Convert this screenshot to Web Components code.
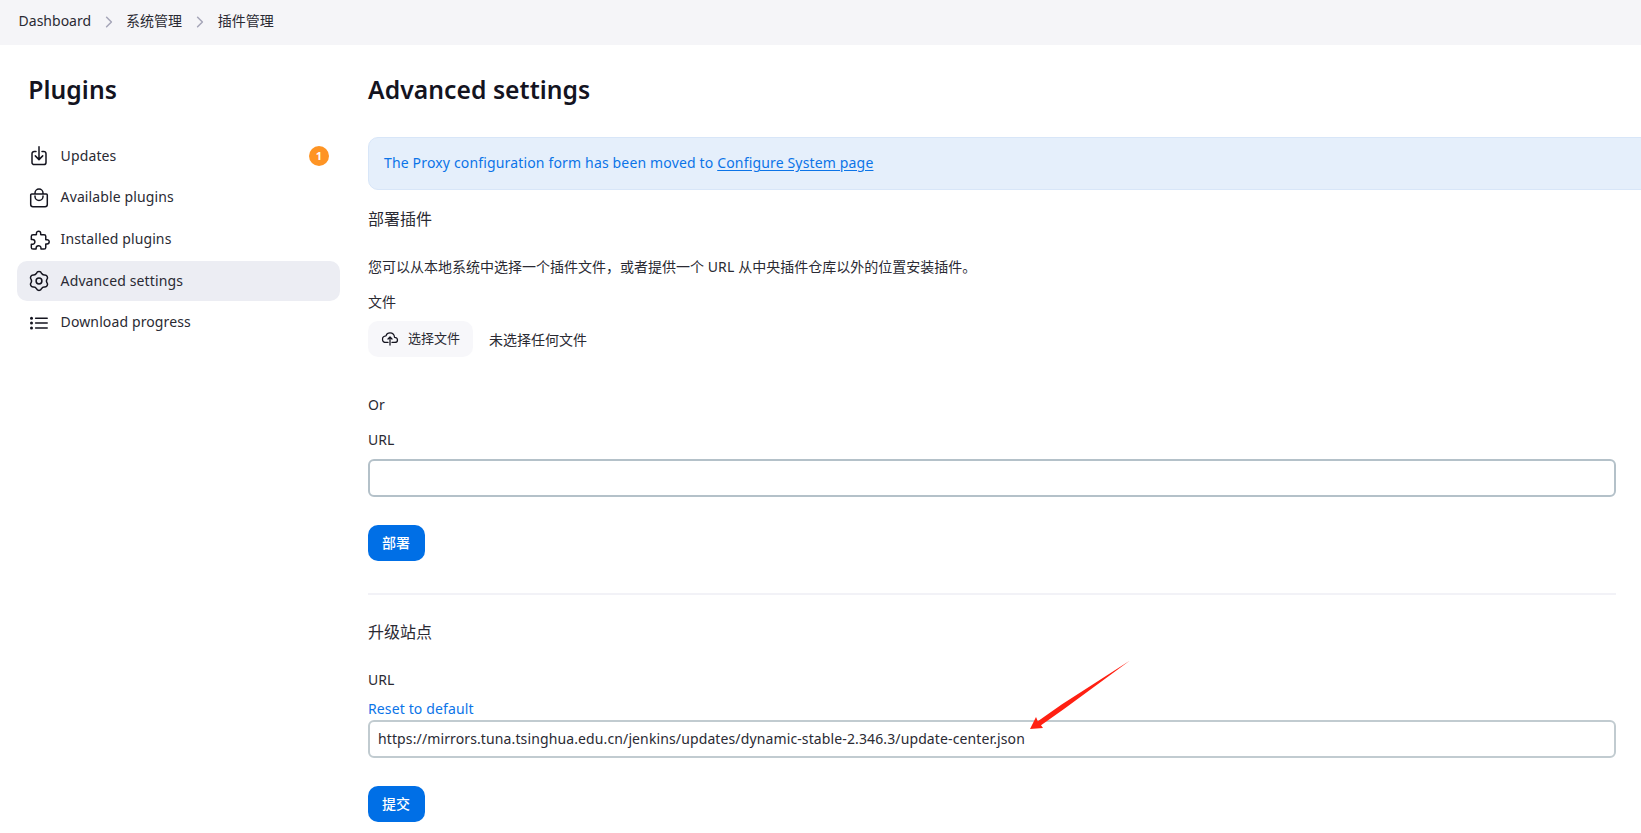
<!DOCTYPE html>
<html lang="zh-CN">
<head>
<meta charset="utf-8">
<title>Plugins - Advanced settings</title>
<style>
html,body{margin:0;background:#fff}
body{font:14px/20px "Noto Sans","Noto Sans CJK SC",sans-serif;color:#2a2a33;height:833px;overflow:hidden;position:relative}
</style>
</head>
<body>
<plugin-page></plugin-page>
<script>
const ICONS = {
  download: '<svg width="24" height="24" viewBox="0 0 24 24"><path d="M9 7.5H7.2a2.2 2.2 0 0 0-2.2 2.2v8.7a2.2 2.2 0 0 0 2.2 2.2h9.6a2.2 2.2 0 0 0 2.2-2.2V9.7a2.2 2.2 0 0 0-2.2-2.2H15M12 2.8v12.4M8.3 11.9l3.7 3.7 3.7-3.7"/></svg>',
  bag: '<svg width="24" height="24" viewBox="0 -.7 24 24"><path d="M4.7 8.2h14.6a1 1 0 0 1 1 1v9.6a2.2 2.2 0 0 1-2.2 2.2H5.9a2.2 2.2 0 0 1-2.2-2.2V9.2a1 1 0 0 1 1-1zM8 8V7.3a4 4 0 0 1 8 0V8M8 10.2v.6a4 4 0 0 0 8 0v-.6"/></svg>',
  puzzle: '<svg width="24" height="24" viewBox="-52.6 -50 558.5 558.5" style="stroke-width:34"><path d="M413.66 246.1H386a2 2 0 01-2-2v-77.24A38.86 38.86 0 00345.14 128H267.9a2 2 0 01-2-2V98.34c0-27.14-21.5-49.86-48.64-50.33a49.53 49.53 0 00-50.4 49.51V126a2 2 0 01-2 2H87.62A39.74 39.74 0 0048 167.62V238a2 2 0 002 2h26.91c29.37 0 53.68 25.48 54.09 54.85.42 29.87-23.51 57.15-53.29 57.15H50a2 2 0 00-2 2v70.38A39.74 39.74 0 0087.62 464H158a2 2 0 002-2v-20.93c0-30.28 24.75-56.35 55-57.06 30.1-.7 57 20.31 57 50.28V462a2 2 0 002 2h71.14A38.86 38.86 0 00384 425.14v-78a2 2 0 012-2h28.48c27.63 0 49.52-22.67 49.52-50.4s-23.2-48.64-50.34-48.64z"/></svg>',
  gear: '<svg width="24" height="24" viewBox="-12 -12 24 24"><path d="M-2.6-7.56A2.75 2.75 0 0 1 2.6-7.56A3 3 0 0 0 5.25-6.04A2.75 2.75 0 0 1 7.85-1.53A3 3 0 0 0 7.85 1.53A2.75 2.75 0 0 1 5.25 6.04A3 3 0 0 0 2.6 7.56A2.75 2.75 0 0 1-2.6 7.56A3 3 0 0 0-5.25 6.04A2.75 2.75 0 0 1-7.85 1.53A3 3 0 0 0-7.85-1.53A2.75 2.75 0 0 1-5.25-6.04A3 3 0 0 0-2.6-7.56z"/><circle r="2.9"/></svg>',
  list: '<svg width="24" height="24" viewBox="0 -.5 24 24"><path d="M8.6 7.7h11.6M8.6 12.6h11.6M8.6 17.5h11.6"/><g style="fill:currentColor;stroke:none"><circle cx="4.5" cy="7.7" r="1.5"/><circle cx="4.5" cy="12.6" r="1.5"/><circle cx="4.5" cy="17.5" r="1.5"/></g></svg>',
  upload: '<svg width="16" height="16" viewBox="0 0 512 512" style="stroke-width:40"><path d="M320 367.79h76c55 0 100-29.21 100-83.6s-53-81.47-96-83.6c-8.89-85.06-71-136.8-144-136.8-69 0-113.44 45.79-128 91.2-60 5.7-112 43.88-112 106.4s54 106.4 120 106.4h56M320 255.79l-64-64-64 64M256 448.21V207.79"/></svg>',
  chevron: '<svg width="8" height="14" viewBox="0 0 8 14"><path d="M1.6 2.2 6.4 7 1.6 11.8"/></svg>'
};

function define(name, css, html) {
  customElements.define(name, class extends HTMLElement {
    constructor() {
      super();
      this.attachShadow({ mode: 'open' }).innerHTML = `<style>${css}</style>${html}`;
    }
  });
}

customElements.define('ui-icon', class extends HTMLElement {
  connectedCallback() {
    const root = this.shadowRoot || this.attachShadow({ mode: 'open' });
    root.innerHTML = `<style>:host{display:block;flex:none;color:#14141f}svg{display:block;overflow:visible;fill:none;stroke:currentColor;stroke-width:1.5;stroke-linecap:round;stroke-linejoin:round}</style>${ICONS[this.getAttribute('name')]}`;
  }
});

define('crumb-bar', `
:host{display:flex;box-sizing:border-box;height:45px;padding:11px 18.6px 0;background:#f5f5f8}
ui-icon{color:#a5a5b8;margin:4px 13px 0 14px}
span:last-child{margin-left:.6px}`,
`<span>Dashboard</span><ui-icon name="chevron"></ui-icon><span>系统管理</span><ui-icon name="chevron"></ui-icon><span>插件管理</span>`);

define('page-title', `
:host{display:block;height:30px;font-size:24.7px;line-height:30px;font-weight:600;white-space:nowrap;color:#14141f;letter-spacing:.05px}`, `<slot></slot>`);

define('nav-item', `
:host{display:flex;align-items:center;box-sizing:border-box;height:40px;padding:0 11px 0 10px;border-radius:10px;letter-spacing:.12px}
:host([selected]){background:#ecedf3}
.t{margin-left:9.6px;flex:1}`,
`<slot name="icon"></slot><span class="t"><slot></slot></span><slot name="badge"></slot>`);

define('count-badge', `
:host{display:block;width:20px;height:20px;border-radius:50%;background:#fe9424;color:#fff;font-size:11px;line-height:20px;font-weight:700;text-align:center;letter-spacing:0}`, `<slot></slot>`);

define('side-panel', `
:host{display:block;width:323px;padding:30px 0 0 17px;flex:none}
page-title{margin-left:11.3px}
nav{display:grid;grid-template-rows:41px 42px 42px 41px 40px;margin-top:31px}`,
`<page-title>Plugins</page-title>
<nav>
<nav-item><ui-icon slot="icon" name="download"></ui-icon>Updates<count-badge slot="badge">1</count-badge></nav-item>
<nav-item><ui-icon slot="icon" name="bag"></ui-icon>Available plugins</nav-item>
<nav-item><ui-icon slot="icon" name="puzzle"></ui-icon>Installed plugins</nav-item>
<nav-item selected><ui-icon slot="icon" name="gear"></ui-icon>Advanced settings</nav-item>
<nav-item><ui-icon slot="icon" name="list"></ui-icon>Download progress</nav-item>
</nav>`);

define('info-alert', `
:host{display:block;box-sizing:border-box;height:53px;padding:15px 15px 0;border:1px solid #d8e6f8;border-radius:10px;background:#e5effb;color:#0b74e8;letter-spacing:.16px}
a{text-decoration:underline;text-underline-offset:2px}`,
`The Proxy configuration form has been moved to <a>Configure System page</a>`);

define('text-field', `
:host{display:block;box-sizing:border-box;height:38px;padding:7px 8px;border:2px solid #b4c1c9;border-radius:6px;background:#fff;letter-spacing:.12px}`, `<slot></slot>`);

define('primary-button', `
:host{display:flex;align-items:center;justify-content:center;box-sizing:border-box;width:57px;height:36px;padding:0 1px 1px 0;border-radius:10px;background:#006fe6;color:#fff;font-weight:500}`, `<slot></slot>`);

define('file-picker', `
:host{display:flex;height:36px}
.b{display:flex;align-items:center;box-sizing:border-box;width:105px;padding-left:14px;border-radius:10px;background:#f7f7fa;font-size:13px}
.b span{margin:-2px 0 0 10px}
.n{margin:9px 0 0 16px}`,
`<div class="b"><ui-icon name="upload"></ui-icon><span>选择文件</span></div><span class="n">未选择任何文件</span>`);

define('settings-panel', `
:host{display:block;flex:1;min-width:0;box-sizing:border-box;padding:30px 25px 0 0}
info-alert{margin:32px -40px 0 0}
.h{font-size:16px;line-height:20px;height:20px}
.r{height:20px}
.l{letter-spacing:.2px}
hr{border:0;height:2px;background:#f2f2f7;margin:32px 0 0}
.link{color:#0b74e8;letter-spacing:.13px}`,
`<page-title>Advanced settings</page-title>
<info-alert></info-alert>
<div class="h" style="margin-top:19px">部署插件</div>
<div class="r" style="margin-top:28px">您可以从本地系统中选择一个插件文件，或者提供一个 <span class="l">URL</span> 从中央插件仓库以外的位置安装插件。</div>
<div class="r" style="margin-top:15px">文件</div>
<file-picker style="margin-top:9px"></file-picker>
<div class="r" style="margin-top:38px">Or</div>
<div class="r" style="margin-top:15px">URL</div>
<text-field style="margin-top:9px"></text-field>
<primary-button style="margin-top:28px">部署</primary-button>
<hr>
<div class="h" style="margin-top:27px">升级站点</div>
<div class="r" style="margin-top:28px">URL</div>
<div class="r link" style="margin-top:9px">Reset to default</div>
<text-field style="margin-top:1px;border-color:#c1cbd0">https://mirrors.tuna.tsinghua.edu.cn/jenkins/updates/dynamic-stable-2.346.3/update-center.json</text-field>
<primary-button style="margin-top:28px">提交</primary-button>`);

define('arrow-mark', `
:host{display:block;position:absolute;left:1028px;top:658px;width:104px;height:74px}
svg{display:block}`,
`<svg width="104" height="74" viewBox="1028 658 104 74"><path fill="#ff2012" d="M1030 729 1036 717 1037.8 721.2 1062 704.3 1130 660.5 1064 709 1041 725.2 1043 727.9z"/></svg>`);

define('plugin-page', `
:host{display:block;overflow:hidden;height:833px}
main{display:flex;gap:28px}`,
`<crumb-bar></crumb-bar><main><side-panel></side-panel><settings-panel></settings-panel></main><arrow-mark></arrow-mark>`);
</script>
</body>
</html>
